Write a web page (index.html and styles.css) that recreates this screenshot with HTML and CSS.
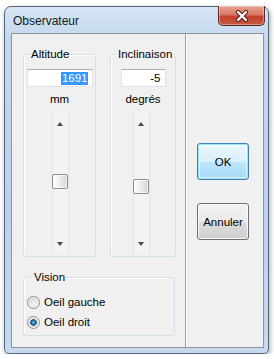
FILE: index.html
```html
<!DOCTYPE html>
<html>
<head>
    <meta charset="UTF-8">
    <title>Observateur</title>
    <link rel="stylesheet" href="styles.css">
</head>
<body>
    <div class="window">
        <div class="titlebar">
            <span class="title">Observateur</span>
            <button class="close" title="Fermer">
                <svg width="14" height="12" viewBox="0 0 14 12">
                    <path d="M3 2 L11 10 M11 2 L3 10" stroke="#4a1b14" stroke-width="4.2" stroke-linecap="round" fill="none"/>
                    <path d="M3 2 L11 10 M11 2 L3 10" stroke="#ffffff" stroke-width="2.4" stroke-linecap="round" fill="none"/>
                </svg>
            </button>
        </div>

        <div class="client">
            <div class="main">
                <div class="groups">
                    <fieldset class="group group-alt">
                        <legend>Altitude</legend>
                        <div class="edit"><span class="selected">1691</span></div>
                        <div class="unit">mm</div>
                        <div class="slider slider-alt">
                            <span class="arrow up"></span>
                            <span class="thumb" style="top: 61px"></span>
                            <span class="arrow down"></span>
                        </div>
                    </fieldset>

                    <fieldset class="group group-inc">
                        <legend>Inclinaison</legend>
                        <div class="edit edit-small">-5</div>
                        <div class="unit">degrés</div>
                        <div class="slider slider-inc">
                            <span class="arrow up"></span>
                            <span class="thumb" style="top: 66px"></span>
                            <span class="arrow down"></span>
                        </div>
                    </fieldset>
                </div>

                <fieldset class="group vision">
                    <legend>Vision</legend>
                    <label class="radio"><input type="radio" name="eye"> Oeil gauche</label>
                    <label class="radio"><input type="radio" name="eye" checked> Oeil droit</label>
                </fieldset>
            </div>

            <div class="side">
                <button class="btn btn-default">OK</button>
                <button class="btn">Annuler</button>
            </div>
        </div>
    </div>
</body>
</html>
```

FILE: styles.css
```css
* {
    margin: 0;
    padding: 0;
    box-sizing: border-box;
    font-family: 'Liberation Sans', Arial, sans-serif;
}

body {
    background: #ffffff;
    font-size: 11px;
    color: #000000;
}

.window {
    margin: 6px 0 0 4px;
    width: 265px;
    height: 348px;
    padding: 0 4px 5px 6px;
    border: 1px solid #55677d;
    border-radius: 7px 7px 5px 5px;
    background: linear-gradient(180deg, #d6e5f5 0%, #c3d7ed 10%, #bcd2ea 60%, #c6d9ee 100%);
    box-shadow: 1px 2px 5px rgba(0,0,0,0.35);
}

.titlebar {
    height: 26px;
    display: flex;
    justify-content: space-between;
    align-items: flex-start;
}

.title {
    margin: 7px 0 0 2px;
    font-size: 12px;
    color: #101820;
}

.close {
    width: 47px;
    height: 20px;
    margin: -1px -1px 0 0;
    border: 1px solid #5b2a24;
    border-top: none;
    border-radius: 0 0 5px 5px;
    background: linear-gradient(180deg, #e8a393 0%, #d97866 45%, #c4402c 55%, #c55a43 100%);
    box-shadow: inset 0 0 0 1px rgba(255,255,255,0.35);
    display: flex;
    align-items: center;
    justify-content: center;
}

.client {
    display: flex;
    height: 315px;
    border: 1px solid #8a96a3;
    background: #f0f0f0;
}

.main {
    width: 174px;
    padding: 13px 0 0 11px;
    border-right: 1px solid #a0a0a0;
}

.groups {
    display: flex;
    gap: 14px;
}

.group {
    border: 1px solid #d5dfe5;
    border-radius: 3px;
    box-shadow: inset 1px 1px 0 #ffffff;
    display: flex;
    flex-direction: column;
}

.group legend {
    margin-left: 6px;
    padding: 0 1px;
    line-height: 14px;
    font-size: 11.5px;
}

.group-alt,
.group-inc {
    height: 210px;
    align-items: center;
}

.group-alt {
    width: 73px;
}

.group-inc {
    width: 66px;
}

.edit {
    margin-top: 8px;
    width: 66px;
    height: 18px;
    background: #ffffff;
    border: 1px solid #e2e3ea;
    border-top-color: #abadb3;
    display: flex;
    justify-content: flex-end;
    align-items: center;
    padding-right: 4px;
    font-size: 11.5px;
}

.edit-small {
    width: 45px;
}

.selected {
    background: #3399ff;
    color: #ffffff;
    line-height: 13px;
    padding: 0 0 0 1px;
}

.unit {
    margin-top: 5px;
    line-height: 14px;
    font-size: 11.5px;
}

.slider {
    position: relative;
    align-self: flex-start;
    margin-top: 7px;
    width: 17px;
    height: 140px;
    border-left: 1px solid #e3e3e3;
    border-right: 1px solid #e3e3e3;
    background: #f3f3f3;
}

.slider-alt {
    margin-left: 28px;
}

.slider-inc {
    margin-left: 22px;
}

.arrow {
    position: absolute;
    left: 4px;
    width: 0;
    height: 0;
    border-left: 3.5px solid transparent;
    border-right: 3.5px solid transparent;
}

.arrow.up {
    top: 9px;
    border-bottom: 4px solid #4a4a4a;
}

.arrow.down {
    bottom: 7px;
    border-top: 4px solid #4a4a4a;
}

.thumb {
    position: absolute;
    left: -1px;
    width: 16px;
    height: 15px;
    border: 1px solid #8c8c8c;
    border-radius: 2px;
    background: linear-gradient(90deg, #ffffff 0%, #ececec 50%, #d6d6d6 100%);
    box-shadow: inset 0 0 0 1px rgba(255,255,255,0.7);
}

.vision {
    margin-top: 13px;
    width: 152px;
    height: 66px;
    padding: 8px 0 0 3px;
}

.radio {
    display: flex;
    align-items: center;
    gap: 4px;
    height: 20px;
    font-size: 11.5px;
}

.radio input {
    appearance: none;
    width: 13px;
    height: 13px;
    border-radius: 50%;
    border: 1px solid #8e8f8f;
    background: radial-gradient(circle at 60% 65%, #f4f4f4 0%, #dcdcdc 60%, #c9c9c9 100%);
    box-shadow: inset 0 0 0 1px #f6f6f6;
}

.radio input:checked {
    background: radial-gradient(circle at 50% 50%, #7cc9f2 0%, #2a7cb8 22%, #124a78 38%, #d0d0d0 44%, #e6e6e6 70%, #d2d2d2 100%);
}

.side {
    flex: 1;
    display: flex;
    flex-direction: column;
    padding: 109px 0 0 11px;
    box-shadow: inset 1px 0 0 #ffffff;
}

.btn {
    width: 52px;
    height: 37px;
    border: 1px solid #707070;
    border-radius: 3px;
    background: linear-gradient(180deg, #f2f2f2 0%, #ebebeb 50%, #dddddd 51%, #cfcfcf 100%);
    box-shadow: inset 0 0 0 1px rgba(255,255,255,0.8);
    font-size: 11.5px;
    color: #000000;
}

.btn + .btn {
    margin-top: 23px;
}

.btn-default {
    border-color: #3c7fb1;
    background: linear-gradient(180deg, #eaf6fd 0%, #d9f0fc 50%, #bee6fd 51%, #a7d9f5 100%);
    box-shadow: inset 0 0 0 1px #9ae2fb, inset 0 0 0 2px rgba(255,255,255,0.5);
}
```
